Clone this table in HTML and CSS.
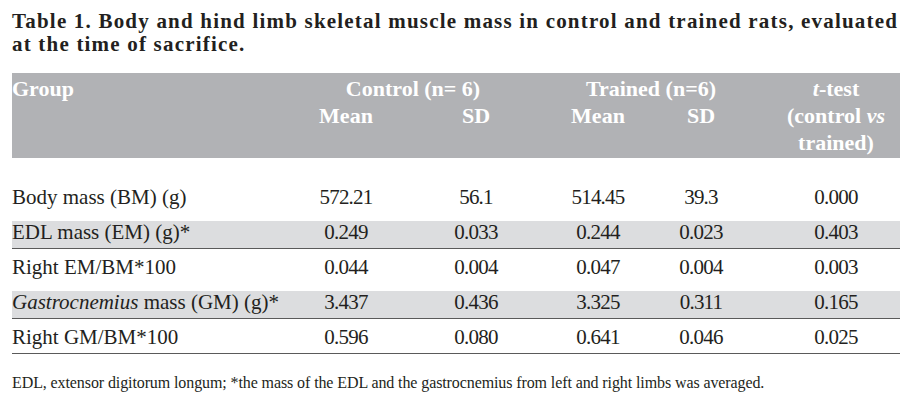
FILE: index.html
```html
<!DOCTYPE html>
<html>
<head>
<meta charset="utf-8">
<link rel="stylesheet" href="styles.css">
</head>
<body>
<div class="page">
  <h1 class="title">Table 1. Body and hind limb skeletal muscle mass in control and trained rats, evaluated<br>at the time of sacrifice.</h1>
  <div class="head">
    <div class="c1">Group</div>
    <div class="span ctrl">Control (n= 6)</div>
    <div class="span trn">Trained (n=6)</div>
    <div class="c6"><i>t</i>-test</div>
    <div class="c2">Mean</div>
    <div class="c3">SD</div>
    <div class="c4">Mean</div>
    <div class="c5">SD</div>
    <div class="c6">(control <i>vs</i></div>
    <div class="c6 r3">trained)</div>
  </div>
  <div class="rows">
    <div class="row">
      <div class="lbl">Body mass (BM) (g)</div>
      <div class="num">572.21</div><div class="num">56.1</div><div class="num">514.45</div><div class="num">39.3</div><div class="num">0.000</div>
    </div>
    <div class="row shade line">
      <div class="lbl">EDL mass (EM) (g)*</div>
      <div class="num">0.249</div><div class="num">0.033</div><div class="num">0.244</div><div class="num">0.023</div><div class="num">0.403</div>
    </div>
    <div class="row">
      <div class="lbl">Right EM/BM*100</div>
      <div class="num">0.044</div><div class="num">0.004</div><div class="num">0.047</div><div class="num">0.004</div><div class="num">0.003</div>
    </div>
    <div class="row shade line">
      <div class="lbl"><i>Gastrocnemius</i> mass (GM) (g)*</div>
      <div class="num">3.437</div><div class="num">0.436</div><div class="num">3.325</div><div class="num">0.311</div><div class="num">0.165</div>
    </div>
    <div class="row line">
      <div class="lbl">Right GM/BM*100</div>
      <div class="num">0.596</div><div class="num">0.080</div><div class="num">0.641</div><div class="num">0.046</div><div class="num">0.025</div>
    </div>
  </div>
  <p class="note">EDL, extensor digitorum longum; *the mass of the EDL and the gastrocnemius from left and right limbs was averaged.</p>
</div>
</body>
</html>
```
FILE: styles.css
```css
html, body {
  margin: 0;
  padding: 0;
  background: #ffffff;
}
.page {
  width: 888px;
  padding: 10px 0 0 12px;
  color: #231f20;
  font-family: "Liberation Serif", "Times New Roman", serif;
}
.title {
  margin: 0;
  font-size: 21px;
  line-height: 23px;
  font-weight: bold;
  letter-spacing: 1.2px;
  white-space: nowrap;
}
.head, .row {
  display: grid;
  grid-template-columns: 294px 80px 180px 64px 142px 128px;
}
.head {
  margin-top: 17px;
  background: #b1b2b5;
  color: #ffffff;
  font-weight: bold;
  font-size: 22px;
  line-height: 27px;
  padding: 2px 0 2px;
  grid-template-rows: 27px 27px 27px;
}
.head > div {
  white-space: nowrap;
  text-align: center;
}
.head .c1 { grid-column: 1; text-align: left; }
.head .c2 { grid-column: 2; }
.head .c3 { grid-column: 3; }
.head .c4 { grid-column: 4; }
.head .c5 { grid-column: 5; }
.head .c6 { grid-column: 6; }
.head .r3 { grid-row: 3; }
.head .ctrl { grid-column: 2 / 4; padding-right: 46px; }
.head .trn { grid-column: 4 / 6; padding-right: 36px; }
.rows {
  padding-top: 20px;
}
.row {
  margin-top: 8px;
  height: 27px;
  font-size: 21px;
  line-height: 23px;
  border-bottom: 1px solid transparent;
  box-sizing: content-box;
}
.row + .row { margin-top: 7px; }
.row.shade { background: #dcdddf; }
.row.line { border-bottom-color: #5a5a5a; }
.lbl {
  white-space: nowrap;
}
.num {
  text-align: center;
  letter-spacing: -0.8px;
}
.note {
  margin: 19px 0 0;
  font-size: 16px;
  line-height: 20px;
  letter-spacing: -0.1px;
}
```
